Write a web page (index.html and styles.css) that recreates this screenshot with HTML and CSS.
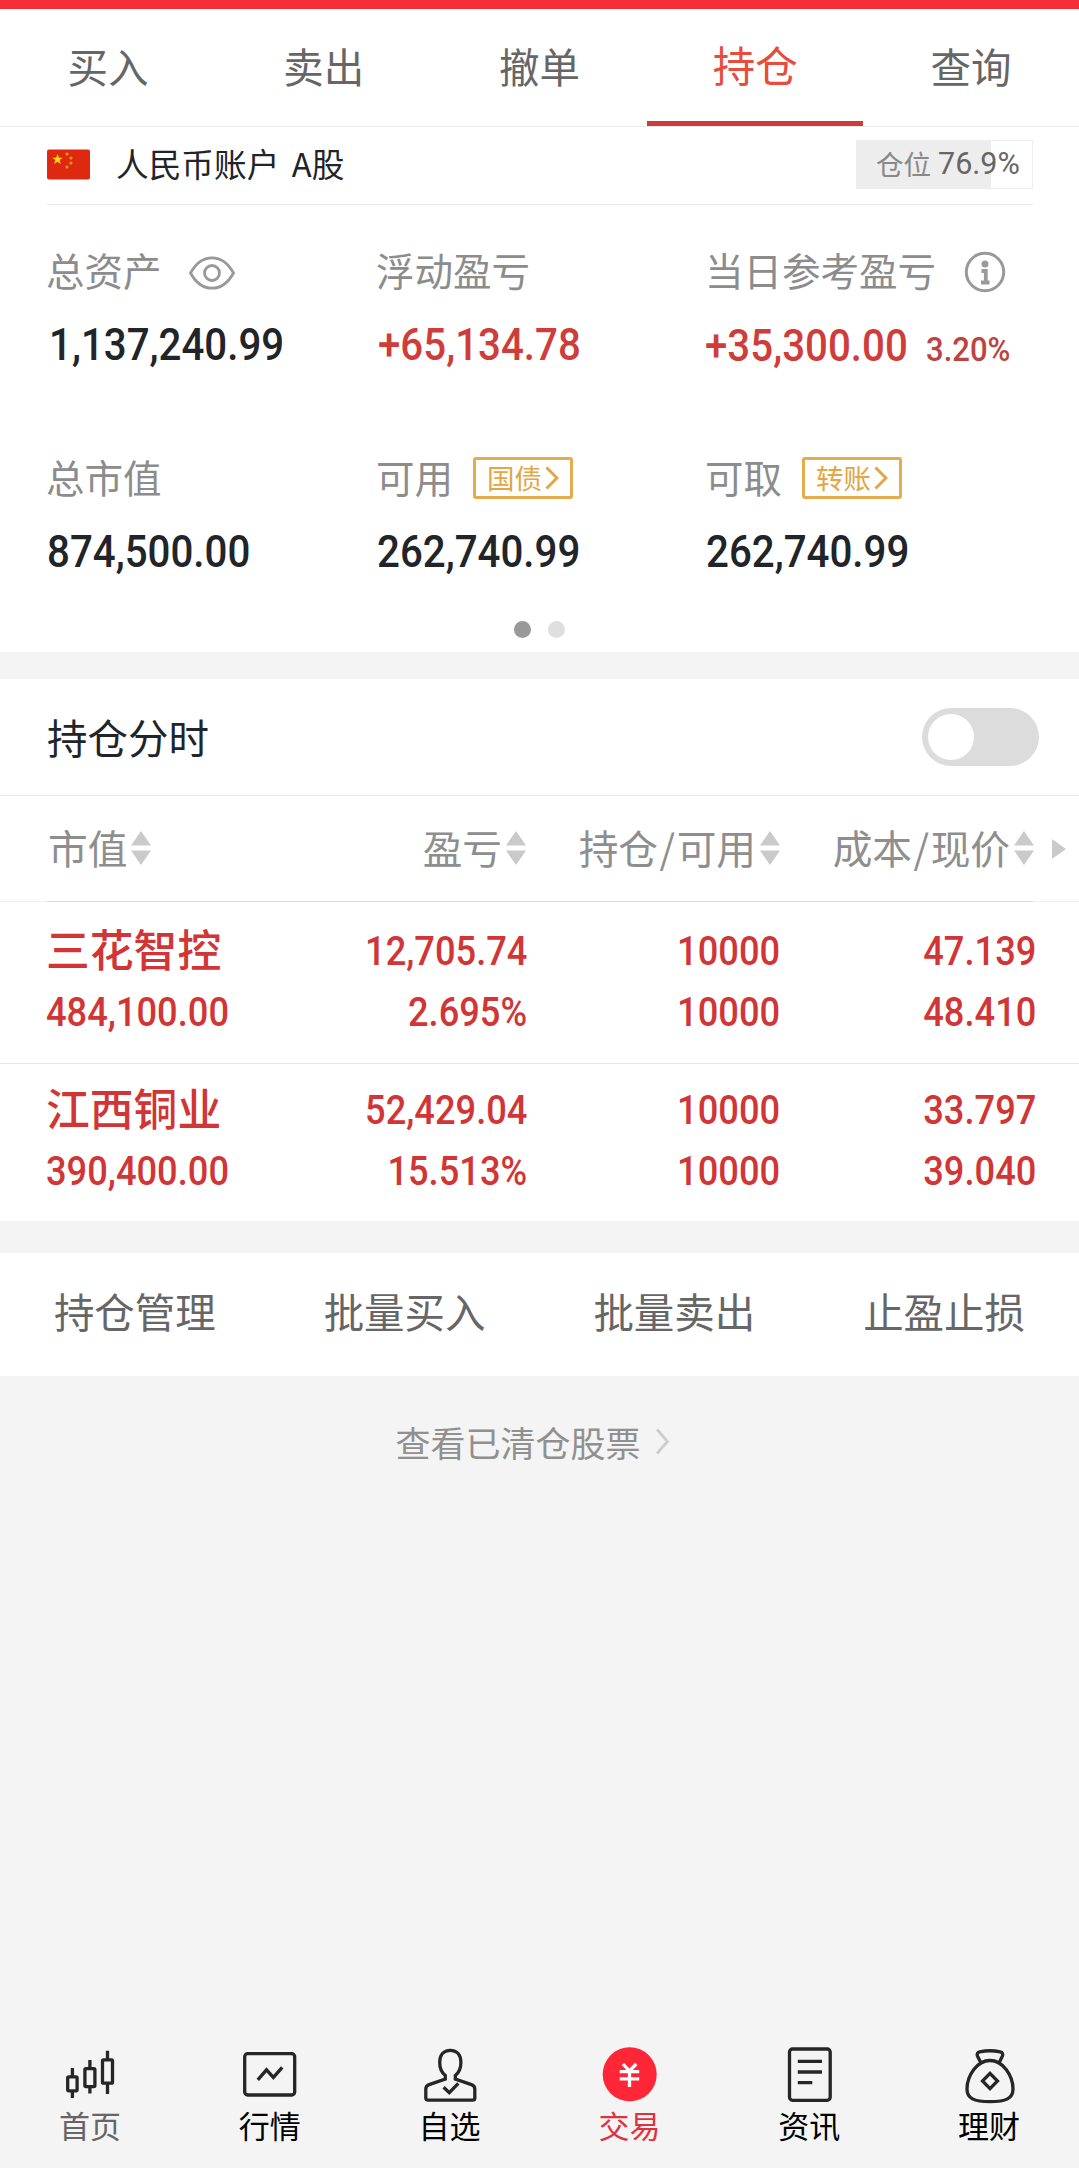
FILE: index.html
```
<!DOCTYPE html>
<html lang="zh-CN">
  <head>
    <meta charset="UTF-8" />
    <meta name="viewport" content="width=device-width, initial-scale=1.0" />
    <title>持仓</title>
    <link rel="stylesheet" href="styles.css">
  </head>
  <body>
    <div class="status-bar"></div>

    <nav class="tabs">
      <a class="tab">买入</a>
      <a class="tab">卖出</a>
      <a class="tab">撤单</a>
      <a class="tab active">持仓</a>
      <a class="tab">查询</a>
    </nav>

    <section class="account">
      <div class="account-head">
        <svg class="flag" viewBox="0 0 43 30">
          <rect width="43" height="30" rx="2" fill="#de2910" />
          <path fill="#ffde00" d="M10.500 4.500l1.300 3.700h4l-3.200 2.400 1.200 3.900-3.300-2.300-3.300 2.300 1.200-3.900-3.200-2.400h4z" />
          <g fill="#f5a010">
            <circle cx="20" cy="4.500" r="1.500" />
            <circle cx="24" cy="8.500" r="1.500" />
            <circle cx="24" cy="13.500" r="1.500" />
            <circle cx="20" cy="17.500" r="1.500" />
          </g>
        </svg>
        <span class="account-name">人民币账户 A股</span>
        <div class="position-rate">仓位<span class="position-rate-num">76.9%</span></div>
      </div>

      <div class="assets">
        <div class="asset">
          <div class="asset-label">总资产
            <svg class="eye" viewBox="0 0 46 34" fill="none" stroke="#999" stroke-width="2.800">
              <path d="M1.500 17C7 7 14 1.800 23 1.800S39 7 44.500 17C39 27 32 32.200 23 32.200S7 27 1.500 17z" />
              <circle cx="23" cy="17" r="7.500" />
            </svg>
          </div>
          <div class="asset-value"><span class="num shift">1,137,240.99</span></div>
        </div>
        <div class="asset">
          <div class="asset-label">浮动盈亏</div>
          <div class="asset-value up"><span class="num">+65,134.78</span></div>
        </div>
        <div class="asset">
          <div class="asset-label">当日参考盈亏
            <svg class="info" viewBox="0 0 42 42" fill="none" stroke="#999" stroke-width="3">
              <circle cx="21" cy="21" r="18.700" />
              <circle cx="21" cy="13" r="3.500" fill="#999" stroke="none" />
              <path stroke-width="3.800" d="M17.500 20h4.300v12M17 31.500h8.500" />
            </svg>
          </div>
          <div class="asset-value up low"><span class="num">+35,300.00</span><span class="num rate">3.20%</span></div>
        </div>
        <div class="asset">
          <div class="asset-label">总市值</div>
          <div class="asset-value"><span class="num">874,500.00</span></div>
        </div>
        <div class="asset">
          <div class="asset-label">可用
            <span class="tag">国债<svg class="tag-arrow" viewBox="0 0 14 24"><path d="M1.500 1.500L12 12 1.500 22.500" /></svg></span>
          </div>
          <div class="asset-value"><span class="num">262,740.99</span></div>
        </div>
        <div class="asset">
          <div class="asset-label">可取
            <span class="tag">转账<svg class="tag-arrow" viewBox="0 0 14 24"><path d="M1.500 1.500L12 12 1.500 22.500" /></svg></span>
          </div>
          <div class="asset-value"><span class="num">262,740.99</span></div>
        </div>
      </div>

      <div class="dots">
        <span class="dot on"></span>
        <span class="dot"></span>
      </div>
    </section>

    <section class="holdings">
      <div class="holdings-title">
        <span>持仓分时</span>
        <span class="switch"></span>
      </div>

      <div class="row table-head">
        <div class="cell">市值<svg class="sort" viewBox="0 0 20 34"><path d="M0 14.500L10 0l10 14.500zM0 19.500h20L10 34z" /></svg></div>
        <div class="cell">盈亏<svg class="sort" viewBox="0 0 20 34"><path d="M0 14.500L10 0l10 14.500zM0 19.500h20L10 34z" /></svg></div>
        <div class="cell">持仓<span class="slash">/</span>可用<svg class="sort" viewBox="0 0 20 34"><path d="M0 14.500L10 0l10 14.500zM0 19.500h20L10 34z" /></svg></div>
        <div class="cell">成本<span class="slash">/</span>现价<svg class="sort" viewBox="0 0 20 34"><path d="M0 14.500L10 0l10 14.500zM0 19.500h20L10 34z" /></svg></div>
        <svg class="more" viewBox="0 0 14 20"><path d="M0 0l14 10L0 20z" /></svg>
      </div>
      <div class="head-line"></div>

      <div class="row stock first">
        <div class="cell"><b class="stock-name">三花智控</b><span class="num">484,100.00</span></div>
        <div class="cell"><span class="num">12,705.74</span><span class="num">2.695%</span></div>
        <div class="cell"><span class="num">10000</span><span class="num">10000</span></div>
        <div class="cell"><span class="num">47.139</span><span class="num">48.410</span></div>
      </div>
      <div class="row stock">
        <div class="cell"><b class="stock-name">江西铜业</b><span class="num">390,400.00</span></div>
        <div class="cell"><span class="num">52,429.04</span><span class="num">15.513%</span></div>
        <div class="cell"><span class="num">10000</span><span class="num">10000</span></div>
        <div class="cell"><span class="num">33.797</span><span class="num">39.040</span></div>
      </div>
    </section>

    <section class="actions">
      <a>持仓管理</a>
      <a>批量买入</a>
      <a>批量卖出</a>
      <a>止盈止损</a>
    </section>

    <a class="cleared">查看已清仓股票
      <svg class="cleared-arrow" viewBox="0 0 15 27"><path d="M2 1.500l10.500 12L2 25.500" /></svg>
    </a>

    <footer class="bottom-nav">
      <a class="nav-item home">
        <svg viewBox="0 0 64 64">
          <rect x="9.700" y="34.800" width="9.400" height="14" rx="1" />
          <path d="M14.400 26v8.500M14.400 49v7" />
          <rect x="26.900" y="26.600" width="10" height="18" rx="1" />
          <path d="M31.900 18v8.500M31.900 45v6.500" />
          <rect x="44.500" y="17.900" width="10" height="23.300" rx="1" />
          <path d="M49.500 8.700v9M49.500 41v11" />
        </svg>
        首页
      </a>
      <a class="nav-item">
        <svg viewBox="0 0 64 64">
          <rect x="6.700" y="11.700" width="50" height="41.300" rx="3" />
          <path d="M19.800 37.800l8.700-10 6.900 7.600 8.800-10" />
        </svg>
        行情
      </a>
      <a class="nav-item">
        <svg viewBox="0 0 64 64">
          <path d="M27.300 37v-3.500C23.500 30.500 21.700 26.500 21.700 20.500 21.700 13 25.500 8.400 32.300 8.400S42.900 13 42.900 20.500c0 6-1.800 10-5.600 13V37l16.200 5.600c2.200.8 3.300 2 3.300 4.400v9c0 1.500-.700 2.200-2.200 2.200H10c-1.500 0-2.200-.7-2.200-2.200v-9c0-2.400 1.100-3.600 3.300-4.400z" />
          <path d="M25.600 45.300l5.700 5.400 9-9.300" />
        </svg>
        自选
      </a>
      <a class="nav-item current">
        <svg viewBox="0 0 64 64">
          <circle class="coin" cx="32.700" cy="32.300" r="27" />
          <path class="yen" d="M26 22l6.500 7 6.700-7M22.700 29.700h19.500M22.700 36.800h19.500M32.500 29v16" />
        </svg>
        交易
      </a>
      <a class="nav-item">
        <svg viewBox="0 0 64 64">
          <rect x="12.500" y="7" width="40.700" height="51.300" rx="3" />
          <path d="M20.800 19.300H45M20.800 30H45M20.800 40.700h14.500" />
        </svg>
        资讯
      </a>
      <a class="nav-item">
        <svg viewBox="0 0 64 64">
          <path d="M24 21l-3.300-6.500c-1.300-3 0-4.300 2-4.700 6-1.200 14.500-1.200 20.500 0 2 .4 3.300 1.700 2 4.700L42 21" />
          <path d="M33 18.500c-13 0-23 15-23 28.500 0 9.500 7 12.700 23 12.700S56 56.500 56 47c0-13.500-10-28.500-23-28.500z" />
          <path d="M33 31.300l7.500 7.700-7.500 7.700-7.500-7.700z" />
        </svg>
        理财
      </a>
    </footer>
  </body>
</html>
```
FILE: styles.css
```
* {
  box-sizing: border-box;
}
body {
  margin: 0;
  height: 2168px;
  display: flex;
  flex-direction: column;
  background-color: #f4f4f4;
  color: #212429;
  font-family: "Noto Sans CJK SC", sans-serif;
  overflow: hidden;
}
svg {
  display: block;
  flex-shrink: 0;
}
/* 数字使用较窄的字形 */
.num {
  display: inline-block;
  font-family: Roboto, "Noto Sans CJK SC", sans-serif;
  font-weight: 500;
  white-space: nowrap;
  transform: scaleX(0.895);
  transform-origin: left center;
}

.status-bar {
  height: 9px;
  background-color: #f42f38;
}

/* 顶部标签 */
.tabs {
  display: flex;
  height: 118px;
  background-color: #fff;
  border-bottom: 1px solid #ebebeb;
}
.tab {
  flex: 1;
  display: flex;
  align-items: center;
  justify-content: center;
  padding-bottom: 4px;
  font-size: 40.5px;
  color: #666;
}
.tab.active {
  font-size: 42.5px;
  color: #e74c3c;
  border-bottom: 5px solid #cc3a3a;
}

/* 账户 */
.account {
  height: 525px;
  background-color: #fff;
}
.account-head {
  display: flex;
  align-items: center;
  height: 78px;
  margin: 0 46px 0 47px;
  padding-bottom: 2px;
  border-bottom: 1px solid #ebebeb;
}
.flag {
  width: 43px;
  height: 31px;
}
.account-name {
  margin-left: 26px;
  padding-bottom: 4px;
  font-size: 32.7px;
  word-spacing: 5px;
}
.position-rate {
  display: flex;
  align-items: center;
  width: 177px;
  height: 49px;
  margin-left: auto;
  padding: 0 0 4px 19px;
  border: 1px solid #eee;
  background: linear-gradient(to right, #ededed 134px, #fff 134px);
  font-size: 27.5px;
  color: #888;
}
.position-rate-num {
  margin: 2px 0 0 7px;
  font-family: Roboto, sans-serif;
  font-size: 30.5px;
  color: #666;
}

.assets {
  display: grid;
  grid-template-columns: 330px 329px 1fr;
  grid-template-rows: 207px 172px;
  padding: 37px 0 0 46px;
}
.asset-label {
  display: flex;
  align-items: center;
  height: 58px;
  padding-bottom: 5px;
  font-size: 38.5px;
  color: #8c8c8c;
}
.asset-value {
  display: flex;
  align-items: baseline;
  margin-top: 18px;
  padding-left: 1px;
  font-size: 45px;
  line-height: 54px;
}
.asset-value.up {
  padding-left: 2px;
  color: #cf3d3b;
}
.asset-value.low {
  margin-top: 19px;
  padding-left: 0;
}
.shift {
  margin-left: 2px;
}
.rate {
  margin-left: -6px;
  font-size: 33px;
  color: #bd4341;
  transform: scaleX(0.94);
}
.eye {
  width: 46px;
  height: 34px;
  margin: 9px 0 0 27px;
}
.info {
  width: 42px;
  height: 42px;
  margin: 6px 0 0 28px;
}
.tag {
  display: flex;
  align-items: center;
  width: 100px;
  height: 42px;
  margin: 5px 0 0 20px;
  padding: 0 0 2px 11px;
  border: 3px solid #e6ac4c;
  border-radius: 3px;
  font-size: 27.5px;
  color: #e3a545;
}
.tag-arrow {
  width: 14px;
  height: 24px;
  margin: 2px 0 0 3px;
  fill: none;
  stroke: #e3a545;
  stroke-width: 3;
}
.dots {
  display: flex;
  justify-content: center;
  gap: 17px;
}
.dot {
  width: 17px;
  height: 17px;
  border-radius: 50%;
  background-color: #dfdfdf;
}
.dot.on {
  background-color: #999;
}

/* 持仓列表 */
.holdings {
  height: 542px;
  margin-top: 27px;
  background-color: #fff;
}
.holdings-title {
  display: flex;
  align-items: center;
  justify-content: space-between;
  height: 117px;
  padding: 0 40px 0 47px;
  border-bottom: 1px solid #ebebeb;
  font-size: 40.5px;
}
.holdings-title span:first-child {
  padding-bottom: 2px;
}
.switch {
  width: 117px;
  height: 58px;
  padding: 6px;
  border-radius: 29px;
  background-color: #dcdcdc;
}
.switch::before {
  content: "";
  display: block;
  width: 46px;
  height: 46px;
  border-radius: 50%;
  background-color: #fff;
}
.row {
  display: grid;
  grid-template-columns: 300px 180px 254px 254px 1fr;
  padding-left: 46px;
}
.table-head {
  height: 105px;
  align-items: center;
}
.table-head .cell {
  display: flex;
  align-items: center;
  justify-content: flex-end;
  padding-bottom: 4px;
  font-size: 39.7px;
  color: #8e8e8e;
}
.table-head .cell:first-child {
  justify-content: flex-start;
  padding-left: 2px;
}
.slash {
  margin: 0 1.5px;
}
.sort {
  width: 20px;
  height: 34px;
  margin: 3px 0 0 4px;
  fill: #cacaca;
}
.more {
  width: 14px;
  height: 20px;
  margin-left: 18px;
  fill: #cacaca;
}
.head-line {
  height: 1px;
  background: linear-gradient(to right, #f1f1f1 47px, #dcdcdc 47px, #dcdcdc 1033px, #f1f1f1 1033px);
}
.stock {
  grid-template-columns: 300px 181px 253px 256px 1fr;
  height: 159px;
  padding-top: 13px;
  color: #d13535;
  font-size: 40.5px;
}
.stock.first {
  height: 162px;
  padding-top: 16px;
  border-bottom: 1px solid #e6e6e6;
}
.stock .cell {
  display: flex;
  flex-direction: column;
  align-items: flex-end;
}
.stock .cell:first-child {
  align-items: flex-start;
}
.stock .num {
  height: 61px;
  line-height: 66px;
  transform-origin: right center;
}
.stock .cell:first-child .num {
  transform-origin: left center;
}
.stock-name {
  height: 61px;
  line-height: 61px;
  font-size: 43.8px;
  font-weight: 500;
}

/* 批量操作 */
.actions {
  display: grid;
  grid-template-columns: repeat(4, 1fr);
  align-items: center;
  height: 123px;
  margin-top: 32px;
  padding-bottom: 8px;
  background-color: #fff;
  font-size: 40.5px;
  color: #666;
  text-align: center;
}
.cleared {
  display: flex;
  align-items: center;
  justify-content: center;
  padding: 40px 14px 0 0;
  font-size: 35px;
  color: #909090;
}
.cleared-arrow {
  width: 15px;
  height: 27px;
  margin-left: 14px;
  fill: none;
  stroke: #ccc;
  stroke-width: 2.800;
}

/* 底部导航 */
.bottom-nav {
  display: flex;
  height: 126px;
  margin-top: auto;
}
.nav-item {
  flex: 1;
  display: flex;
  flex-direction: column;
  align-items: center;
  font-size: 31px;
  line-height: 38px;
  color: #000;
}
.nav-item svg {
  width: 64px;
  height: 64px;
  fill: none;
  stroke: #262626;
  stroke-width: 3.300;
}
.nav-item.home {
  color: #666;
}
.nav-item.current {
  color: #e0323e;
}
.nav-item .coin {
  fill: #ff2638;
  stroke: none;
}
.nav-item .yen {
  stroke: #fff;
}
```
